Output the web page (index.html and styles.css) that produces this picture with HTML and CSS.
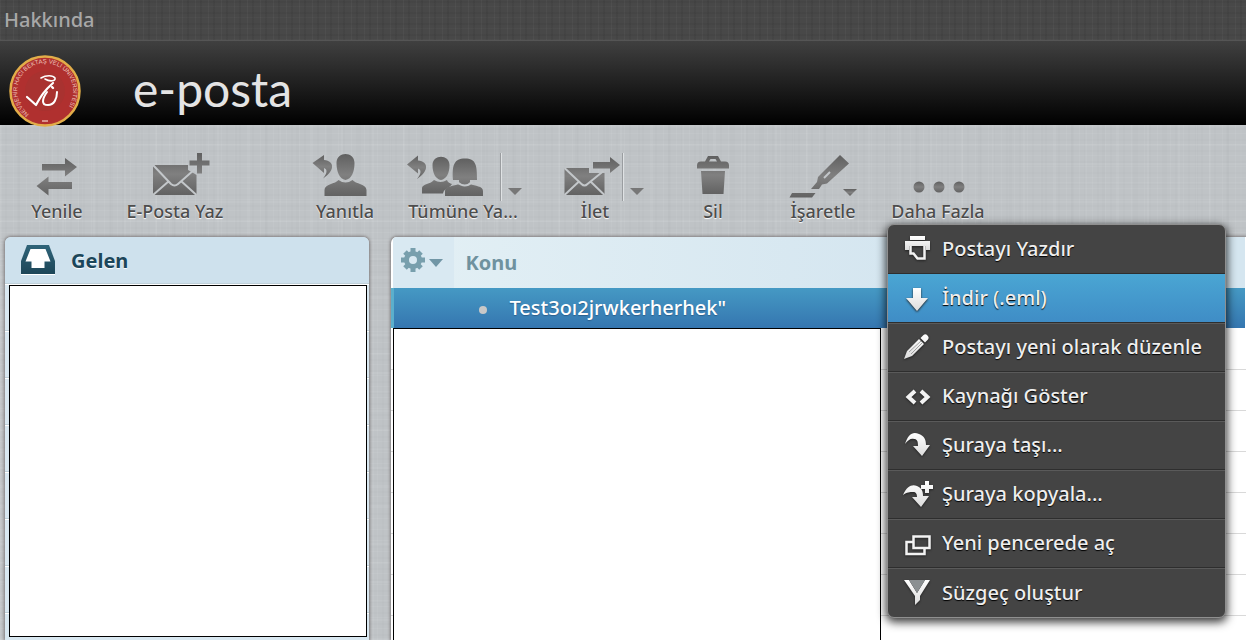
FILE: index.html
```html
<!DOCTYPE html>
<html lang="tr">
<head>
<meta charset="utf-8">
<title>e-posta</title>
<link rel="stylesheet" href="styles.css">
</head>
<body>
<svg class="defs" aria-hidden="true">
  <defs>
    <linearGradient id="g" x1="0" y1="0" x2="0" y2="1"><stop offset="0" stop-color="#606060"/><stop offset=".5" stop-color="#808080"/><stop offset="1" stop-color="#626262"/></linearGradient>
    <linearGradient id="w" x1="0" y1="0" x2="0" y2="1"><stop offset="0" stop-color="#ffffff"/><stop offset="1" stop-color="#dcdcdc"/></linearGradient>
    <linearGradient id="t" x1="0" y1="0" x2="0" y2="1"><stop offset="0" stop-color="#2f6479"/><stop offset="1" stop-color="#1d4658"/></linearGradient>
  </defs>
</svg>

<nav class="topbar"><a href="#">Hakkında</a></nav>

<header class="header">
  <svg class="seal" viewBox="0 0 72 72" role="img" aria-label="Nevşehir Hacı Bektaş Veli Üniversitesi">
    <circle cx="36" cy="36" r="34.500" fill="#b0302f" stroke="#e2ad49" stroke-width="2.500"/>
    <circle cx="36" cy="36" r="20" fill="#a93230"/>
    <path id="ring" d="M20 59A28 28 0 1 1 55 57" fill="none"/>
    <text class="seal-text"><textPath href="#ring">NEVŞEHİR HACI BEKTAŞ VELİ ÜNİVERSİTESİ</textPath></text>
    <path d="M33 66h6" stroke="#e8b3ac" stroke-width="1.500"/>
    <g fill="none" stroke="#fff" stroke-linecap="round" stroke-linejoin="round">
      <path d="M18 42l9 8c5-9 8-14 17-22" stroke-width="2.200"/>
      <path d="M32 23c5-3 12-3 14 0 1 3-5 4-10 1" stroke-width="1.600"/>
      <path d="M38 37c-5 7-6 13 1 13 6 0 9-6 9-13" stroke-width="2"/>
      <path d="M43 32l1 1" stroke-width="2.400"/>
    </g>
  </svg>
  <h1 class="brand">e-posta</h1>
</header>

<div class="toolbar" role="toolbar" aria-label="İşlemler">
  <button class="tool">
    <svg width="48" height="48" viewBox="33 153 48 48"><path d="M42 164h23v-6l12 9-12 9.500v-6H42zM72 182H48.500v-5.500L36.500 186l12 9.500V189H72z"/></svg>
    Yenile
  </button>
  <button class="tool tool-wide">
    <svg width="80" height="48" viewBox="136 153 80 48">
      <path d="M154 165h35v5l7 4 1.500 1v20H154zM198 153h5v7.500h7.500v5H203v8h-5v-8h-7.500v-5h7.500z"/>
      <path class="fold" d="M154 165l18 19q3.500 3 7 0l17-15M154 195l16-14M197.500 195L182 181"/>
    </svg>
    E-Posta Yaz
  </button>
  <button class="tool after-gap">
    <svg width="80" height="48" viewBox="305 153 80 48">
      <path d="M312.500 163L324 155v5c11 1 11 11-1 18.500 4-5 5-9 1-10.500v5z"/>
      <path d="M336.500 163c0-12 18-12 18 0 0 9-3 16-9 17-6-1-9-8-9-17zM324.500 196v-6c0-6 11-6 14-10q7 5 14 0c3 4 14 4 14 10v6z"/>
    </svg>
    Yanıtla
  </button>
  <div class="split">
    <button class="tool tool-wide">
      <svg width="100" height="48" viewBox="413 153 100 48" overflow="visible">
        <path d="M407 164.500l11-9v5c11 1 11 11-1 18.500 4-5 5-9 1-10.500v5z"/>
        <path d="M432.500 165c0-11 17-11 17 0 0 8-3 14-8.500 15-5.500-1-8.500-7-8.500-15zM422 193.500V188c0-4 9-4 12-8q6.500 4 13 0c1 3 3 3 5 4-2 4-8 4-9 9.500z"/>
        <path d="M453 180c-1-15 1-21.500 12-21.500S477 165 477 180h-7v4c5 2 13 2 13 7v5h-38v-5c0-5 9-5 14-7v-4z"/>
        <path class="fold" d="M457 182q8 7 15 0"/>
      </svg>
      Tümüne Ya...
    </button>
    <button class="more more-far" aria-label="Tümüne yanıtla seçenekleri"></button>
  </div>
  <div class="split ilet">
    <button class="tool">
      <svg width="64" height="48" viewBox="563 153 64 48">
        <path d="M564.500 168H589v5h15.500v22h-40zM593 162h17v-5l10 8-10 8v-4.500h-17z"/>
        <path class="fold" d="M564.500 168l17 16q3 3 6 0l16-13M564.500 195l15-14M604.500 195L590 181"/>
      </svg>
      İlet
    </button>
    <button class="more" aria-label="İletme seçenekleri"></button>
  </div>
  <button class="tool sil">
    <svg width="48" height="48" viewBox="689 153 48 48"><path d="M697 168.500v-3q0-4 4-4h4l3-5.500h10l3 5.500h4q4 0 4 4v3zM709 161.500h8l-1.500-2.500h-5zM701 171h24l-1.500 23h-21z" fill-rule="evenodd"/></svg>
    Sil
  </button>
  <button class="tool isaretle">
    <svg width="80" height="48" viewBox="784 153 80 48">
      <path d="M793 193h23.500l-3.500 4.500h-22.500zM812 189l6-7 1-5 22-22 9 8.500-22 20-5 1-3 4.500z"/>
      <path class="fold" d="M825 178l6-6"/>
      <path d="M844 189h14l-7 7z"/>
    </svg>
    İşaretle
  </button>
  <div class="split">
    <button class="tool daha" aria-haspopup="menu" aria-expanded="true">
      <svg width="64" height="48" viewBox="907 153 64 48"><path d="M914.500 187a5.500 5.500 0 1 0 11 0 5.500 5.500 0 1 0-11 0M934.500 187a5.500 5.500 0 1 0 11 0 5.500 5.500 0 1 0-11 0M954.500 187a5.500 5.500 0 1 0 11 0 5.500 5.500 0 1 0-11 0"/></svg>
      Daha Fazla
    </button>
    <div class="menu" role="menu">
      <button role="menuitem">
        <svg viewBox="0 0 28 28"><path d="M6 2h15v4H6zM1 7h25v9h-4v-4H5v4H1z"/><path d="M6.500 12v7.500h3l4 5h7V12" fill="none" stroke="#f3f3f3" stroke-width="2.500"/></svg>
        Postayı Yazdır</button>
      <button role="menuitem" class="active">
        <svg viewBox="0 0 28 28"><path d="M9 4h8v10h7L13 27 2 14h7z"/></svg>
        İndir (.eml)</button>
      <button role="menuitem">
        <svg viewBox="0 0 28 28"><path d="M0 26l3-8L15 6l5 5L8 23zM16.500 5l3-3q2-1.500 4 .5t.5 4l-3 3z"/><path d="M5 19l12-11M7 21l11-11" stroke="#8d8d8d" stroke-width=".8"/></svg>
        Postayı yeni olarak düzenle</button>
      <button role="menuitem">
        <svg viewBox="0 0 28 28"><path d="M11 9l-6.500 6L11 21M17 9l6.500 6L17 21" fill="none" stroke="#f3f3f3" stroke-width="4"/></svg>
        Kaynağı Göster</button>
      <button role="menuitem">
        <svg viewBox="0 0 28 28"><path d="M1 13C4 3 9 0 15 3c5 2 7 5 7 11h4l-8 11-9-10h5c0-5-1-7-4-7-3-1-6 1-9 5z"/></svg>
        Şuraya taşı...</button>
      <button role="menuitem">
        <svg viewBox="0 0 28 28" overflow="visible"><path d="M-1 15C3 6 8 4 13 6c4 2 6 4 6 10h6l-8 11-9-10h5c0-3-1-5-4-5s-6 0-10 3zM21 1h4v4h4v4h-4v4h-4V9h-4V5h4z"/></svg>
        Şuraya kopyala...</button>
      <button role="menuitem">
        <svg viewBox="0 0 28 28"><path d="M9 13H2.500v12h18v-5" fill="none" stroke="#f3f3f3" stroke-width="2.500"/><path d="M9.500 7.500h16V19h-16z" fill="none" stroke="#f3f3f3" stroke-width="2.500"/></svg>
        Yeni pencerede aç</button>
      <button role="menuitem">
        <svg viewBox="0 0 28 28"><path d="M0 2h5l8 13 8-13h5L16 18v4l-5 5v-9z"/><path d="M5 2h16l-5 8-3 5-3-5z" fill="#8b9092"/></svg>
        Süzgeç oluştur</button>
    </div>
  </div>
</div>

<main class="main">
  <aside class="panel folders">
    <a class="folder" href="#">
      <svg width="34" height="32" viewBox="0 0 34 32"><path d="M6 1h22l6 16v13H0V17z"/><path d="M9.500 5h15l5 12.500h-6V24h-13v-6.500h-6z" fill="#fff"/></svg>
      Gelen
    </a>
    <div class="folder-rows"><div class="blank"></div></div>
  </aside>

  <section class="panel messages">
    <table>
      <thead>
        <tr>
          <th class="options">
            <button aria-label="Liste seçenekleri">
              <svg width="42" height="26" viewBox="0 0 42 26">
                <g transform="translate(12 13)"><circle r="6.500" fill="none" stroke="#789fad" stroke-width="5"/><path d="M0-12v4M0 12V8M-12 0h4M12 0H8M-8-8l2.500 2.500M8 8L5.500 5.500M-8 8l2.500-2.500M8-8L5.500-5.500" stroke="#789fad" stroke-width="5"/></g>
                <path d="M28 12h14l-7 8z" fill="#7196a6"/>
              </svg>
            </button>
          </th>
          <th class="subject" scope="col">Konu</th>
        </tr>
      </thead>
      <tbody>
        <tr class="selected"><td></td><td><span class="dot"></span><a href="#">Test3oı2jrwkerherhek"</a></td></tr>
      </tbody>
    </table>
    <div class="rows"><div class="blank"></div></div>
  </section>
</main>
</body>
</html>
```
FILE: styles.css
```css
* { box-sizing: border-box; }

body {
  margin: 0;
  min-height: 100vh;
  display: flex;
  flex-direction: column;
  overflow: hidden;
  font-family: "Noto Sans", "Open Sans", sans-serif;
  font-size: 20px;
  font-weight: 500;
  background:
    repeating-linear-gradient(90deg, rgba(255,255,255,.05) 0 1px, transparent 1px 5px, rgba(0,0,0,.01) 5px 7px, transparent 7px 13px),
    repeating-linear-gradient(90deg, rgba(255,255,255,.05) 0 2px, transparent 2px 17px, rgba(0,0,0,.01) 17px 20px, transparent 20px 31px),
    repeating-linear-gradient(0deg, rgba(255,255,255,.05) 0 1px, transparent 1px 4px, rgba(0,0,0,.01) 4px 6px, transparent 6px 11px),
    repeating-linear-gradient(0deg, rgba(255,255,255,.05) 0 2px, transparent 2px 19px),
    #bfc3c6;
}

a { color: inherit; text-decoration: none; }

button {
  margin: 0;
  padding: 0;
  border: 0;
  background: none;
  color: inherit;
  font: inherit;
}

.defs { position: absolute; width: 0; height: 0; }

.topbar {
  height: 41px;
  padding: 0 4px;
  border-bottom: 1px solid #555;
  color: #a8a8a8;
  line-height: 40px;
  background:
    repeating-linear-gradient(90deg, rgba(255,255,255,.03) 0 1px, transparent 1px 5px, rgba(0,0,0,.05) 5px 7px, transparent 7px 13px),
    repeating-linear-gradient(0deg, rgba(255,255,255,.02) 0 1px, transparent 1px 4px, rgba(0,0,0,.04) 4px 6px, transparent 6px 11px),
    #484848;
}

.header {
  height: 84px;
  display: flex;
  align-items: flex-start;
  gap: 52px;
  padding: 14px 9px 0;
  background: linear-gradient(#404040, #000);
}

.seal { flex: none; width: 72px; height: 72px; }
.seal-text { fill: #efc4bd; font: 400 6px "Liberation Sans", sans-serif; }

.brand {
  margin: 0;
  color: #e4e4e4;
  font: 400 48px/68px Lato, sans-serif;
}

.toolbar {
  height: 112px;
  display: flex;
  padding: 28px 10px 0;
  color: #4d4d4d;
  font-size: 18px;
  text-shadow: 0 1px 1px #fff;
}

.tool {
  flex: none;
  width: 94px;
  display: flex;
  flex-direction: column;
  align-items: center;
  line-height: 20px;
  white-space: nowrap;
  text-shadow: inherit;
}
.tool svg { fill: url(#g); }
.tool-wide { width: 142px; }
.after-gap { margin-left: 52px; }
.fold { fill: none; stroke: #c3c7ca; stroke-width: 2; }

.split { position: relative; flex: none; }
.ilet { margin-left: 14px; }
.sil { margin-left: 24px; }
.isaretle { margin-left: 16px; }
.daha { width: 120px; margin-left: 8px; }

/* Divider and arrow drawn over the right edge of a split button */
.more {
  position: absolute;
  top: 0;
  left: 74px;
  width: 30px;
  height: 48px;
  border-left: 1px solid #9a9da0;
  box-shadow: inset 1px 0 #dfe2e4;
}
.more-far { left: 108px; }
.more::after {
  content: "";
  display: block;
  width: 0;
  margin: 28px 0 0 7px;
  border: 7px solid transparent;
  border-top-color: #777;
  border-bottom: 0;
}

.menu {
  position: absolute;
  z-index: 2;
  top: 71px;
  left: 17px;
  width: 339px;
  overflow: hidden;
  border: 1px solid #8f8f8f;
  border-radius: 7px;
  background: #444;
  color: #eee;
  font-size: 20px;
  text-shadow: 0 1px 1px #000;
  box-shadow: 0 3px 10px 1px rgba(0,0,0,.8);
}
.menu button {
  width: 100%;
  height: 49px;
  display: flex;
  align-items: center;
  gap: 10px;
  padding: 0 16px 2px;
  border-top: 1px solid #5a5a5a;
  border-bottom: 1px solid #2e2e2e;
  text-shadow: inherit;
  white-space: nowrap;
}
.menu button:first-child { border-top: 0; }
.menu button:last-child { border-bottom: 0; }
.menu .active { background: linear-gradient(#4aa5d3, #3f8dc6); border-top-color: #4aa5d3; }
.menu svg { width: 28px; height: 28px; flex: none; fill: url(#w); filter: drop-shadow(0 1px 1px #222); }

.main { flex: 1; display: flex; gap: 22px; padding-left: 5px; }

.panel {
  overflow: hidden;
  border-radius: 6px 6px 0 0;
  box-shadow: 0 0 3px 1px rgba(90,80,80,.6);
}

.folders {
  flex: none;
  width: 364px;
  display: flex;
  flex-direction: column;
  background: #d9e8f1;
}
.folder {
  height: 47px;
  display: flex;
  align-items: center;
  gap: 16px;
  padding: 0 16px;
  border-bottom: 1px solid #bfd0d9;
  background: #cee1ed;
  color: #1c465a;
  font-weight: 700;
  text-shadow: 0 1px 1px #fff;
}
.folder svg { fill: url(#t); filter: drop-shadow(0 1px 0 #fff); }
.folder-rows {
  flex: 1;
  display: flex;
  padding: 1px 2px 3px 4px;
  background: repeating-linear-gradient(#fff 0 1px, #d9e8f1 1px 46px, #bfd0d9 46px 47px);
}

.blank { flex: 1; border: 1px solid #000; background: #fff; }

.messages { flex: 1; display: flex; flex-direction: column; border-top-right-radius: 0; background: #fff; }

table { width: 100%; border-collapse: collapse; }
th, td { padding: 0; text-align: left; }
thead tr { height: 51px; background: linear-gradient(90deg, #e3f0f5, #d5e6f0 500px); }
.options { width: 61px; padding-left: 8px; background: #d9e9f2; }
.options button { display: block; }
.subject { padding-left: 12px; color: #6f929f; }
.selected { height: 40px; background: linear-gradient(#4599c4, #3576b0); color: #fff; text-shadow: 0 1px 1px #2b5f8c; }
.selected td { padding-bottom: 2px; }
.selected td:first-child { border-left: 3px solid #5bafcc; }
.dot {
  display: inline-block;
  width: 8px;
  height: 8px;
  margin: 0 23px 1px 25px;
  border-radius: 50%;
  background: #c8c8c8;
}

.rows {
  flex: 1;
  display: flex;
  padding-left: 2px;
  background: repeating-linear-gradient(#fff 0 40px, #d9d9d9 40px 41px) 0 1px;
}
.rows .blank { flex: 0 0 488px; border-bottom: 0; }
```
